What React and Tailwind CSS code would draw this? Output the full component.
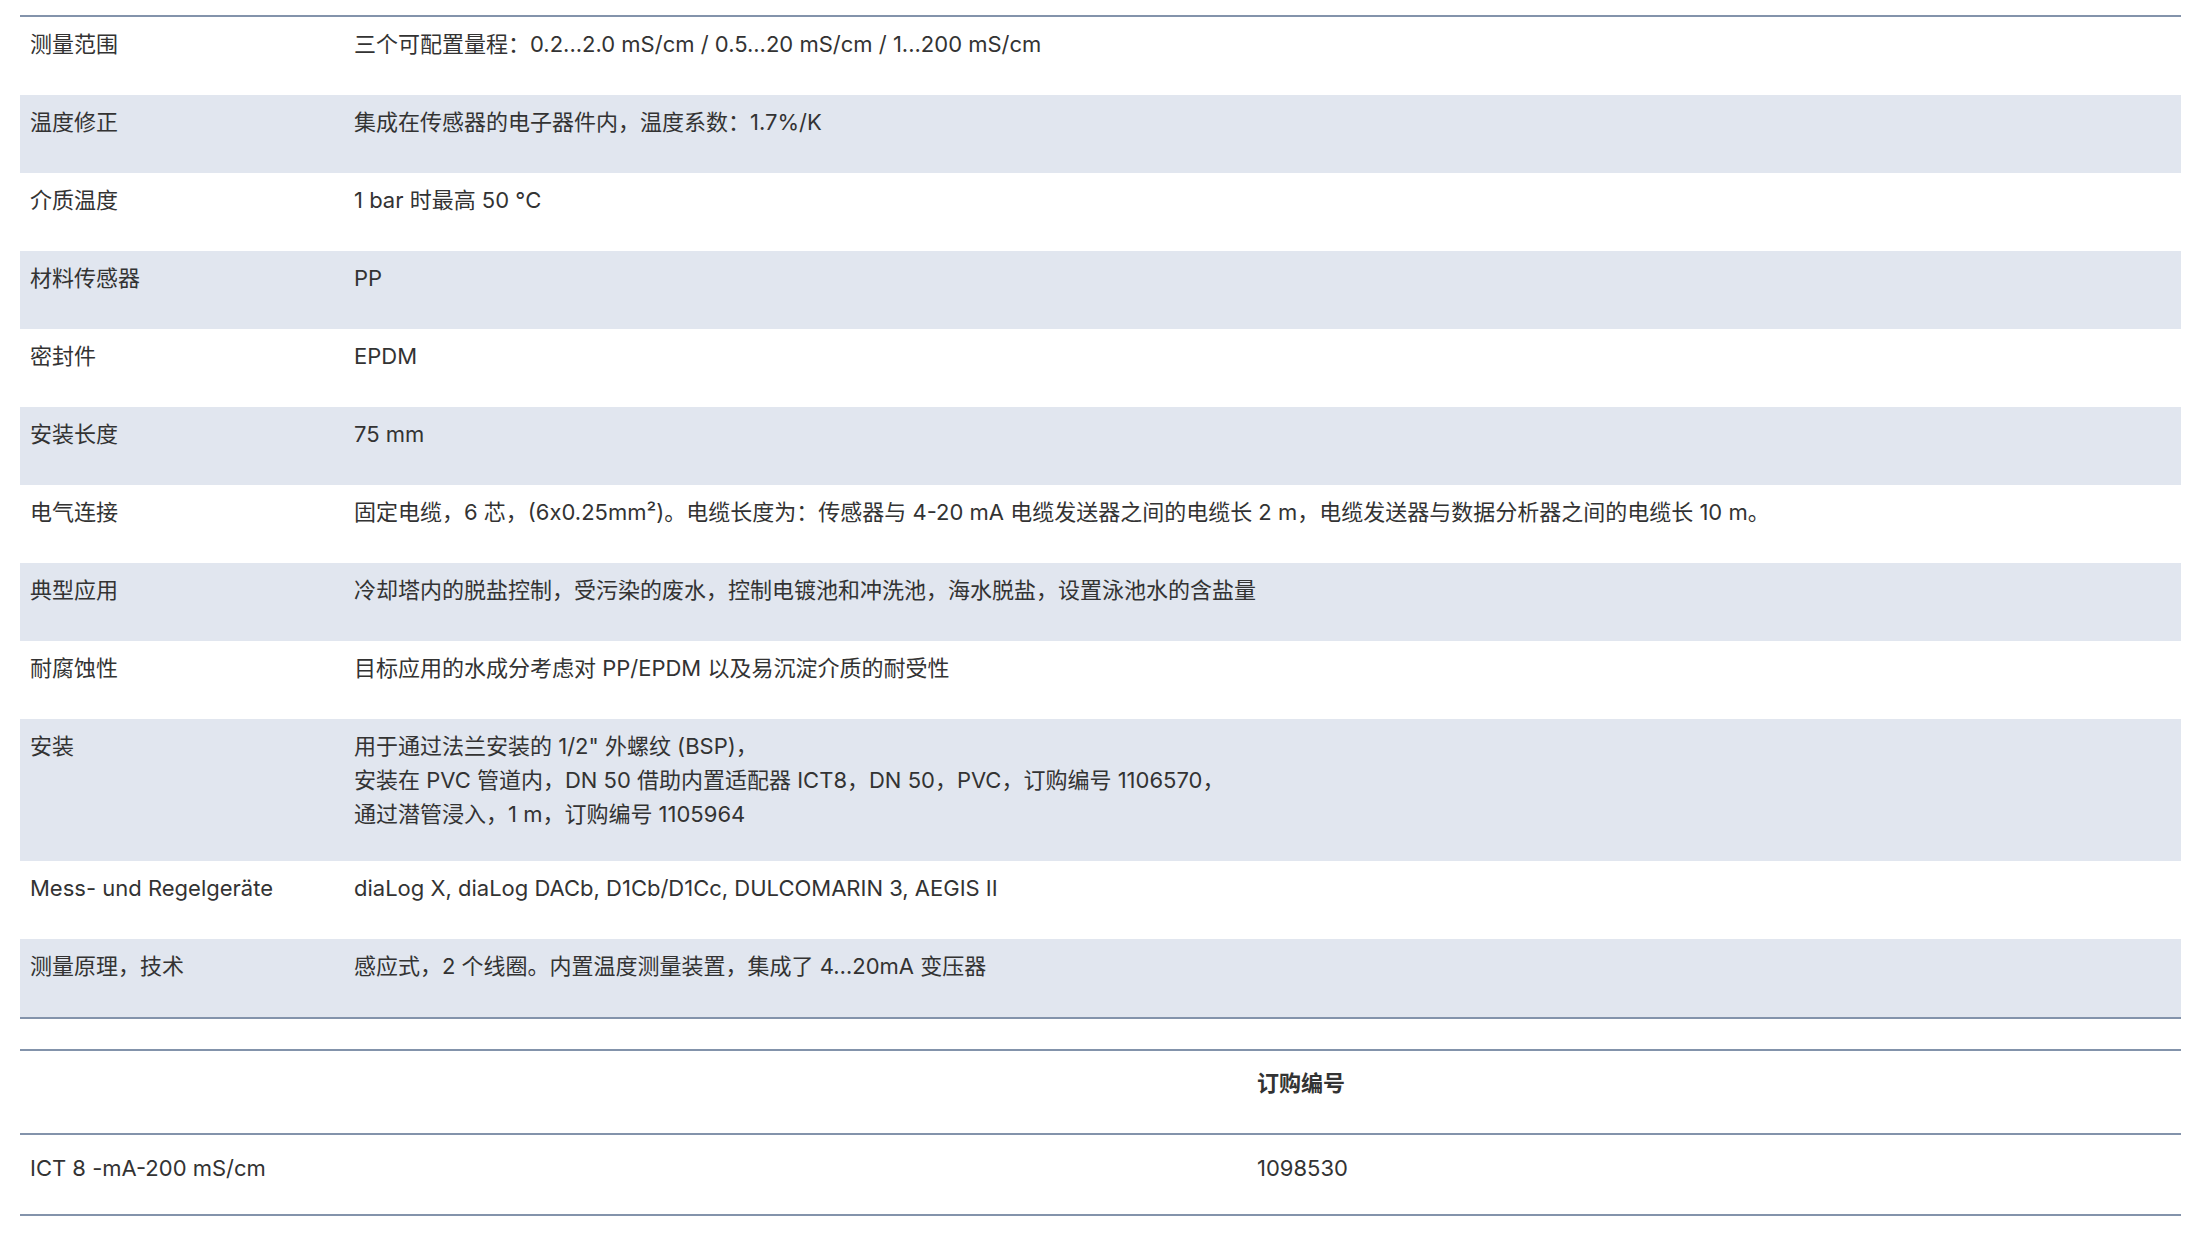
const ROWS = [
  ["测量范围", ["三个可配置量程：0.2...2.0 mS/cm / 0.5...20 mS/cm / 1...200 mS/cm"]],
  ["温度修正", ["集成在传感器的电子器件内，温度系数：1.7%/K"]],
  ["介质温度", ["1 bar 时最高 50 °C"]],
  ["材料传感器", ["PP"]],
  ["密封件", ["EPDM"]],
  ["安装长度", ["75 mm"]],
  ["电气连接", ["固定电缆，6 芯，(6x0.25mm²)。电缆长度为：传感器与 4-20 mA 电缆发送器之间的电缆长 2 m，电缆发送器与数据分析器之间的电缆长 10 m。"]],
  ["典型应用", ["冷却塔内的脱盐控制，受污染的废水，控制电镀池和冲洗池，海水脱盐，设置泳池水的含盐量"]],
  ["耐腐蚀性", ["目标应用的水成分考虑对 PP/EPDM 以及易沉淀介质的耐受性"]],
  ["安装", [
    "用于通过法兰安装的 1/2\" 外螺纹 (BSP)，",
    "安装在 PVC 管道内，DN 50 借助内置适配器 ICT8，DN 50，PVC，订购编号 1106570，",
    "通过潜管浸入，1 m，订购编号 1105964",
  ]],
  ["Mess- und Regelgeräte", ["diaLog X, diaLog DACb, D1Cb/D1Cc, DULCOMARIN 3, AEGIS II"]],
  ["测量原理，技术", ["感应式，2 个线圈。内置温度测量装置，集成了 4…20mA 变压器"]],
];

export default function App() {
  return (
    <div
      className="min-h-[1243px] bg-white px-[20px] pt-[15px] text-[22px] leading-[34px] text-[#333]"
      style={{ fontFamily: 'Inter, "Noto Sans CJK SC", sans-serif' }}
    >
      <div className="border-y-2 border-[#8393ab]">
        {ROWS.map(([label, lines], i) => (
          <div
            key={label}
            className={`flex min-h-[78px] pt-[10px] pb-[30px] ${i % 2 ? "bg-[#e1e6ef]" : ""}`}
          >
            <div className="w-[334px] shrink-0 pl-[10px]">{label}</div>
            <div className="flex-1">
              {lines.map((l) => (
                <div key={l}>{l}</div>
              ))}
            </div>
          </div>
        ))}
      </div>

      <div className="mt-[30px] border-y-2 border-[#8393ab]">
        <div className="flex h-[84px] items-start border-b-2 border-[#8393ab] pt-[15px]">
          <div className="w-[1237px] shrink-0" />
          <div className="font-bold">订购编号</div>
        </div>
        <div className="flex h-[79px] pt-[16px]">
          <div className="w-[1237px] shrink-0 pl-[10px]">ICT 8 -mA-200 mS/cm</div>
          <div>1098530</div>
        </div>
      </div>
    </div>
  );
}
